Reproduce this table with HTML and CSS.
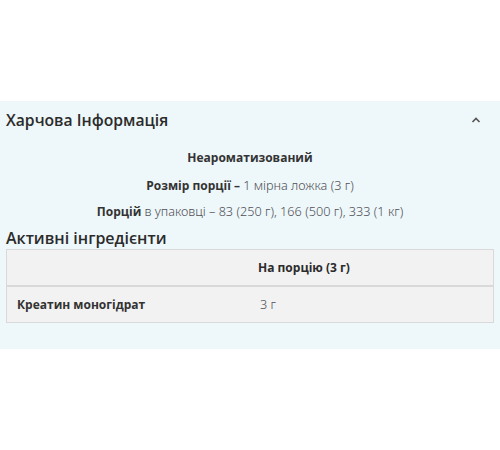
FILE: index.html
```html
<!DOCTYPE html>
<html lang="uk">
<head>
  <meta charset="UTF-8">
  <meta name="viewport" content="width=device-width, initial-scale=1.0">
  <title>Харчова Інформація</title>
  <link rel="stylesheet" href="styles.css">
</head>
<body>
  <section class="nutrition">
    <div class="nutrition-head">
      <h2>Харчова Інформація</h2>
      <svg class="chevron" width="10" height="6" viewBox="0 0 10 6">
        <path d="M1.5 5 L5 1.5 L8.5 5" fill="none" stroke="#555" stroke-width="1.6"/>
      </svg>
    </div>
    <div class="facts">
      <p><b>Неароматизований</b></p>
      <p><b>Розмір порції –</b> <span class="val">1 мірна ложка (3 г)</span></p>
      <p><b>Порцій</b> <span class="val">в упаковці – 83 (250 г), 166 (500 г), 333 (1 кг)</span></p>
    </div>
    <h3>Активні інгредієнти</h3>
    <table class="ingredients">
      <tr>
        <th></th>
        <th>На порцію (3 г)</th>
      </tr>
      <tr>
        <td class="name">Креатин моногідрат</td>
        <td class="val">3 г</td>
      </tr>
    </table>
  </section>
</body>
</html>
```

FILE: styles.css
```css
body {
  margin: 0;
  background: #fff;
  font-family: 'Open Sans', sans-serif;
  color: #2b2b2b;
}
.nutrition {
  margin-top: 101px;
  height: 248px;
  background: #eef7f9;
  padding: 0 6px;
  box-sizing: border-box;
}
.nutrition-head {
  display: flex;
  align-items: center;
  justify-content: space-between;
  height: 38px;
  padding-right: 13px;
}
.nutrition-head h2 {
  margin: 0;
  font-size: 15.7px;
  font-weight: 600;
}
.chevron {
  display: block;
}
.facts {
  text-align: center;
  font-size: 12px;
  padding-top: 10px;
}
.facts p {
  margin: 0 0 8.5px;
  height: 18px;
  line-height: 18px;
}
.facts b {
  font-weight: 700;
  color: #333;
}
.val {
  font-family: 'Noto Sans', sans-serif;
  font-size: 12.7px;
  font-weight: 300;
  color: #4f5058;
}
h3 {
  margin: 0;
  font-size: 16px;
  font-weight: 600;
  height: 19px;
  line-height: 19px;
}
.ingredients {
  width: 100%;
  border-collapse: separate;
  border-spacing: 0;
  background: #f2f2f2;
  border: 1px solid #d9d9d9;
  font-size: 12px;
  margin-top: 1px;
}
.ingredients th,
.ingredients td {
  width: 50%;
  height: 35px;
  padding: 0 10px;
  text-align: left;
  border-bottom: 1px solid #d9d9d9;
}
.ingredients tr:last-child td {
  border-bottom: none;
}
.ingredients tr + tr td {
  border-top: 1px solid #d9d9d9;
}
.ingredients th {
  font-weight: 700;
  padding-left: 8px;
}
.ingredients .name {
  font-weight: 700;
  color: #333;
}
```
